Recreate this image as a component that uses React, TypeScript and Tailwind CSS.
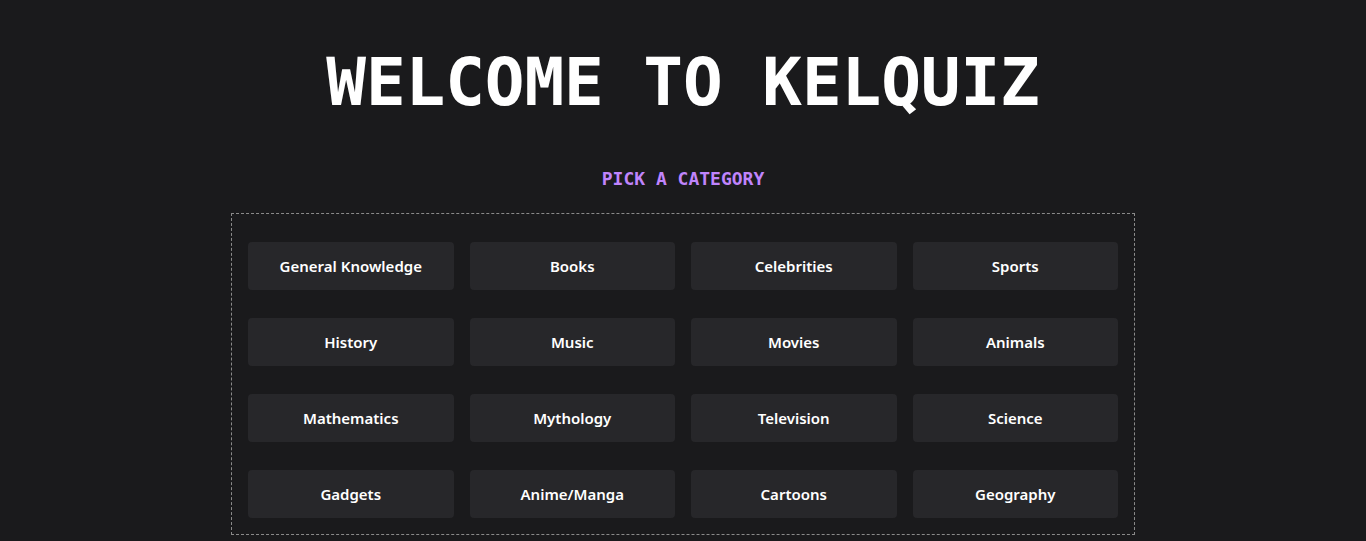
import React from "react";

const categories = [
  "General Knowledge",
  "Books",
  "Celebrities",
  "Sports",
  "History",
  "Music",
  "Movies",
  "Animals",
  "Mathematics",
  "Mythology",
  "Television",
  "Science",
  "Gadgets",
  "Anime/Manga",
  "Cartoons",
  "Geography",
];

const App: React.FC = () => {
  return (
    <div className="min-h-screen bg-[#1a1a1c] flex flex-col items-center pt-[45px]">
      <h1 className="text-[66px] leading-[76px] font-bold text-white font-['DejaVu_Sans_Mono',monospace] tracking-[-0.1px]">
        WELCOME TO KELQUIZ
      </h1>

      <h2 className="mt-[46px] text-[18px] leading-[24px] font-bold text-[#c084fc] font-['DejaVu_Sans_Mono',monospace]">
        PICK A CATEGORY
      </h2>

      <div className="mt-[22px] w-[904px] border border-dashed border-[#8a8a8a] px-4 pt-7 pb-4">
        <div className="grid grid-cols-4 gap-x-4 gap-y-7">
          {categories.map((c) => (
            <button
              key={c}
              className="h-12 rounded bg-[#27272a] text-white text-[15px] font-semibold font-['Noto_Sans',sans-serif]"
            >
              {c}
            </button>
          ))}
        </div>
      </div>
    </div>
  );
};

export default App;
